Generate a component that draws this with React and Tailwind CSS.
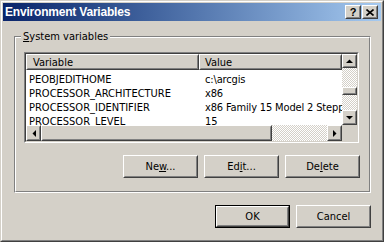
import React from "react";

function Raised({ className = "", inner = "", children }) {
  return (
    <div className={`border border-t-white border-l-white border-b-[#404040] border-r-[#404040] bg-[#d4d0c8] ${className}`}>
      <div className={`w-full h-full border border-t-[#d4d0c8] border-l-[#d4d0c8] border-b-[#808080] border-r-[#808080] flex items-center ${inner}`}>
        {children}
      </div>
    </div>
  );
}

function Checker({ className = "" }) {
  return (
    <div className={`bg-[image:repeating-conic-gradient(#ffffff_0_25%,#d4d0c8_0_50%)] bg-[length:2px_2px] ${className}`} />
  );
}

function Arrow({ dir }) {
  const pts = {
    up: "0,4 7,4 3.5,0.5",
    down: "0,0 7,0 3.5,3.5",
    left: "4,0 4,7 0.5,3.5",
    right: "0,0 0,7 3.5,3.5",
  }[dir];
  const vertical = dir === "up" || dir === "down";
  return (
    <svg width={vertical ? 7 : 4} height={vertical ? 4 : 7} viewBox={vertical ? "0 0 7 4" : "0 0 4 7"}>
      <polygon points={pts} fill="#000" />
    </svg>
  );
}

function Button({ children, def = false }) {
  if (def) {
    return (
      <div className="w-[75px] h-[23px] border border-black">
        <Raised className="w-full h-full" inner="justify-center">
          <span className="leading-none">{children}</span>
        </Raised>
      </div>
    );
  }
  return (
    <Raised className="w-[75px] h-[23px]" inner="justify-center">
      <span className="leading-none">{children}</span>
    </Raised>
  );
}

const rows = [
  ["PEOBJEDITHOME", "c:\\arcgis"],
  ["PROCESSOR_ARCHITECTURE", "x86"],
  ["PROCESSOR_IDENTIFIER", "x86 Family 15 Model 2 Stepping 7, GenuineIntel"],
  ["PROCESSOR_LEVEL", "15"],
];

export default function App() {
  return (
    <div className="w-[384px] h-[242px] bg-[#d4d0c8] font-['DejaVu_Sans_Condensed','Liberation_Sans',sans-serif] text-[11px] text-black overflow-hidden">
      <div className="w-full h-full border border-t-[#d4d0c8] border-l-[#d4d0c8] border-b-[#404040] border-r-[#404040]">
        <div className="w-full h-full border border-t-white border-l-white border-b-[#808080] border-r-[#808080] p-px flex flex-col">
          {/* Title bar */}
          <div className="h-[18px] shrink-0 flex items-center bg-linear-to-r from-[#0a246a] to-[#a6caf0] pl-[2px] pr-[3px]">
            <span className="flex-1 text-white font-bold text-[12px] font-['Liberation_Sans',sans-serif] tracking-[-0.2px] leading-none">
              Environment Variables
            </span>
            <div className="flex gap-px">
              <Raised className="w-[16px] h-[14px]" inner="justify-center">
                <span className="font-['Liberation_Sans',sans-serif] font-bold text-[11px] leading-none">?</span>
              </Raised>
              <Raised className="w-[16px] h-[14px]" inner="justify-center">
                <svg width="8" height="7" viewBox="0 0 8 7">
                  <path d="M0.5 0.5 L7.5 6.5 M7.5 0.5 L0.5 6.5" stroke="#000" strokeWidth="1.6" />
                </svg>
              </Raised>
            </div>
          </div>

          {/* Body */}
          <div className="flex-1 flex flex-col pl-[11px] pr-[10px] pt-[15px]">
            {/* Group box */}
            <div className="relative h-[157px] border border-t-[#808080] border-l-[#808080] border-b-white border-r-white">
              <div className="w-full h-full border border-t-white border-l-white border-b-[#808080] border-r-[#808080] flex flex-col pl-[8px] pr-[9px] pt-[14px]">
                {/* List view */}
                <div className="w-[335px] h-[91px] border border-t-[#808080] border-l-[#808080] border-b-white border-r-white">
                  <div className="w-full h-full border border-t-[#404040] border-l-[#404040] border-b-[#d4d0c8] border-r-[#d4d0c8] bg-white flex flex-col">
                    <div className="flex h-[71px]">
                      <div className="flex-1 min-w-0 overflow-hidden flex flex-col">
                        <div className="flex h-[16px] shrink-0">
                          <Raised className="w-[173px] h-full shrink-0" inner="pl-[5px]">
                            <span className="leading-none">Variable</span>
                          </Raised>
                          <Raised className="flex-1 h-full" inner="pl-[4px]">
                            <span className="leading-none">Value</span>
                          </Raised>
                        </div>
                        <div className="pt-[3px] flex flex-col">
                          {rows.map(([k, v]) => (
                            <div key={k} className="flex h-[14px] leading-[13px] shrink-0">
                              <div className="w-[173px] shrink-0 pl-[3px] whitespace-nowrap overflow-hidden">{k}</div>
                              <div className="flex-1 min-w-0 pl-[6px] whitespace-nowrap overflow-hidden tracking-[-0.15px]">{v}</div>
                            </div>
                          ))}
                        </div>
                      </div>
                      {/* Vertical scrollbar */}
                      <div className="w-[15px] shrink-0 flex flex-col">
                        <Raised className="h-[14px] shrink-0" inner="justify-center">
                          <Arrow dir="up" />
                        </Raised>
                        <Checker className="h-[19px] shrink-0" />
                        <Raised className="h-[8px] shrink-0" />
                        <Checker className="flex-1" />
                        <Raised className="h-[15px] shrink-0" inner="justify-center">
                          <Arrow dir="down" />
                        </Raised>
                      </div>
                    </div>
                    {/* Horizontal scrollbar */}
                    <div className="flex h-[16px]">
                      <Raised className="w-[15px] h-full shrink-0" inner="justify-center">
                        <Arrow dir="left" />
                      </Raised>
                      <Raised className="w-[231px] h-full shrink-0" />
                      <Checker className="flex-1 h-full" />
                      <Raised className="w-[15px] h-full shrink-0" inner="justify-center">
                        <Arrow dir="right" />
                      </Raised>
                      <div className="w-[15px] h-full shrink-0 bg-[#d4d0c8]" />
                    </div>
                  </div>
                </div>

                {/* Buttons */}
                <div className="flex justify-end gap-[6px] mt-[12px]">
                  <Button>Ne<u>w</u>...</Button>
                  <Button>Ed<u>i</u>t...</Button>
                  <Button>De<u>l</u>ete</Button>
                </div>
              </div>
              <span className="absolute left-[6px] top-[-7px] px-[2px] bg-[#d4d0c8] leading-[14px]">
                <u>S</u>ystem variables
              </span>
            </div>

            {/* OK / Cancel */}
            <div className="flex justify-end gap-[6px] mt-[12px]">
              <Button def>OK</Button>
              <Button>Cancel</Button>
            </div>
          </div>
        </div>
      </div>
    </div>
  );
}
